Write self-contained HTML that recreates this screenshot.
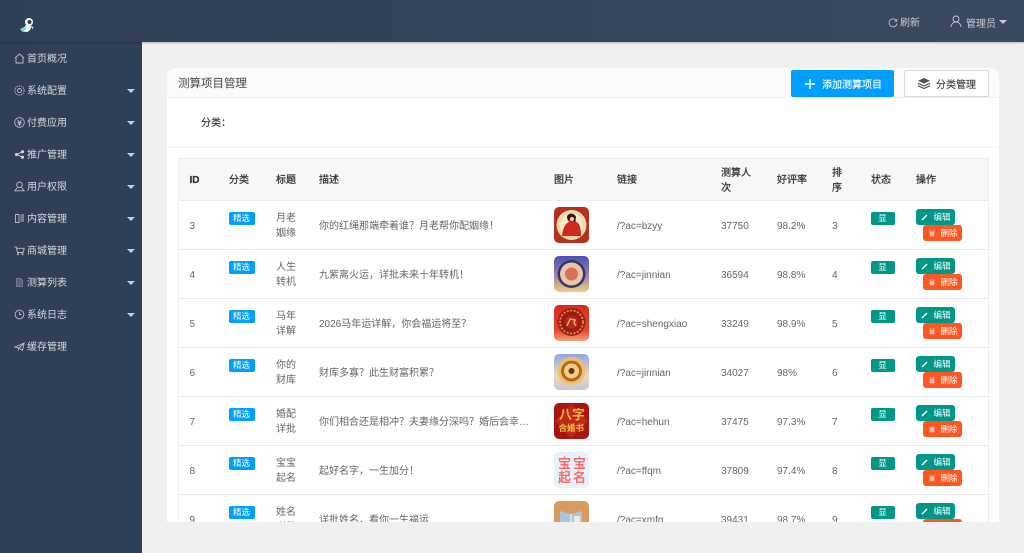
<!DOCTYPE html>
<html lang="zh"><head><meta charset="utf-8"><title>测算项目管理</title>
<style>
*{box-sizing:border-box}
html,body{margin:0;padding:0}
html{background:#f0f0f0}
body{width:1024px;height:553px;overflow:hidden;background:#f0f0f0;position:relative;font:10px/15px "Liberation Sans","Noto Sans CJK SC",sans-serif;color:#666;filter:blur(.3px)}
.top{position:absolute;left:0;top:0;width:1024px;height:42px;background:linear-gradient(90deg,#2f4056,#3a4a5e);box-shadow:0 1px 2px rgba(0,0,0,.25);z-index:3;color:#c8ccd2}
.top span,.top svg{position:absolute}
.side{position:absolute;left:0;top:42px;width:142px;height:511px;background:#2f4056;color:#d5d8dc;z-index:2}
.m{position:absolute;left:0;width:142px;height:32px;line-height:34px;padding-left:27px}
.m svg{position:absolute;left:14px;top:10px;width:11px;height:11px;fill:none;stroke:#b9bfc7;stroke-width:.9}
.m i{position:absolute;left:127px;top:14px;border:4.500px solid transparent;border-top:4px solid #c9cdd3;border-bottom:0}
.card{position:absolute;left:167px;top:68px;width:832px;height:454px;background:#fff;border-radius:8px 8px 0 0;overflow:hidden}
.ch{height:30px;border-bottom:1px solid #f2f2f2;background:#fbfbfb;font-size:11.500px;line-height:32px;padding-left:11px;color:#444}
.btn{position:absolute;top:2px;height:27px;border-radius:2px;font-size:10px;-webkit-text-stroke:.15px}
.b1{left:624px;width:103px;background:#009fff;color:#fff;padding-left:31px;line-height:31px}
.b2{left:737px;width:85px;background:#fff;border:1px solid #d9d9d9;color:#444;padding-left:31px;line-height:29px}
.flt{position:absolute;left:0;top:30px;width:832px;height:50px;border-bottom:2px solid #f6f6f6;color:#333;padding:18px 0 0 34px;-webkit-text-stroke:.15px}
table{position:absolute;left:11px;top:90px;width:810px;border-collapse:collapse;table-layout:fixed;border:1px solid #eee;border-width:1px 1px 0 1px}
th,td{padding:2px 10.500px 0 10.500px;text-align:left;font-weight:400;vertical-align:middle;position:relative;border-bottom:1px solid #ebebeb}
th{height:42px;background:#f7f7f7;color:#333;line-height:15px;-webkit-text-stroke:.25px}
td{height:49px;color:#666}
td.d{white-space:nowrap;overflow:hidden;text-overflow:ellipsis}
.tag{position:absolute;left:10px;top:11px;width:26px;height:13px;background:#009fff;border-radius:2px;color:#fff;font-size:8.500px;line-height:13px;text-align:center}
.show{width:24px;background:#009688}
.img{position:absolute;left:10px;top:6px;width:35px;height:36px;border-radius:5px;overflow:hidden;display:block}
.ed,.de{position:absolute;height:16px;width:39px;border-radius:3px;color:#fff;font-size:8.500px;line-height:16px;padding-left:18px}
.ed{left:10px;top:8px;background:#009688}
.de{left:17px;top:24px;background:#ff5722}
.ed svg,.de svg{position:absolute;left:5px;top:4px;width:8px;height:8px}
</style></head><body>
<div class="top">
<svg style="left:19px;top:17px" width="16" height="17" viewBox="0 0 16 17"><circle cx="10" cy="5" r="4" fill="#eef8f8"/><circle cx="10.500" cy="5" r="2" fill="#2f4056"/><path d="M6.500 8l6 1-1 3.500-3 2.500-6-.5 3-1.500z" fill="#e6f7f4"/><path d="M1 12l5-2.500 1 2.500-4 2.500z" fill="#6fdcca"/><path d="M12 9l2.500 1-1 2.500z" fill="#bfeee6"/></svg>
<svg style="left:888px;top:18px" width="10" height="10" viewBox="0 0 10 10" fill="none" stroke="#b9bfc7" stroke-width=".9"><path d="M8.600 3A4 4 0 1 0 9 5.500"/><path d="M8.800 1v2.200H6.600"/></svg>
<span style="left:900px;top:16px">刷新</span>
<svg style="left:950px;top:15px" width="12" height="13" viewBox="0 0 12 13" fill="none" stroke="#c8ccd2" stroke-width=".9"><circle cx="6" cy="4" r="3"/><path d="M1 12c.4-3 2.300-5 5-5s4.600 2 5 5"/></svg>
<span style="left:966px;top:17px">管理员</span>
<span style="left:999px;top:20px;border:4px solid transparent;border-top:4px solid #c8ccd2;border-bottom:0"></span>
</div>
<div class="side">
<div class="m" style="top:1px"><svg viewBox="0 0 11 11"><path d="M1 5l4.500-4L10 5M2 4.500V10h7V4.500"/></svg>首页概况</div>
<div class="m" style="top:33px"><svg viewBox="0 0 11 11"><circle cx="5.500" cy="5.500" r="2"/><circle cx="5.500" cy="5.500" r="4.600" stroke-dasharray="1.500 .8"/></svg>系统配置<i></i></div>
<div class="m" style="top:65px"><svg viewBox="0 0 11 11"><circle cx="5.500" cy="5.500" r="4.800"/><path d="M3.500 3l2 2.500 2-2.500M3.500 5.500h4M3.500 7h4M5.500 5.500V9"/></svg>付费应用<i></i></div>
<div class="m" style="top:97px"><svg viewBox="0 0 11 11" style="fill:#d5d8dc;stroke:#d5d8dc"><circle cx="2.500" cy="5.500" r="1.100"/><circle cx="8.500" cy="2.800" r="1.100"/><circle cx="8.500" cy="8.200" r="1.100"/><path d="M2.500 5.500l6-2.700M2.500 5.500l6 2.700" fill="none"/></svg>推广管理<i></i></div>
<div class="m" style="top:129px"><svg viewBox="0 0 11 11"><circle cx="5.500" cy="3.800" r="2.800"/><path d="M3.500 6.500L.8 9.800h9.400L7.500 6.500"/></svg>用户权限<i></i></div>
<div class="m" style="top:161px"><svg viewBox="0 0 11 11"><path d="M1.500 1.500h3.500v8H1.500zM6.500 2h3.500M6.500 4h3.500M6.500 6h3.500M6.500 8h3.500"/></svg>内容管理<i></i></div>
<div class="m" style="top:193px"><svg viewBox="0 0 11 11"><path d="M.5 2h1.800l1.200 5.500h5.500L10.300 3.300H2.700"/><circle cx="4" cy="9.200" r=".6"/><circle cx="8.500" cy="9.200" r=".6"/></svg>商城管理<i></i></div>
<div class="m" style="top:225px"><svg viewBox="0 0 11 11" style="stroke:#6f7c8c;fill:#55637a"><path d="M2.500 1.500h4l2 2v6h-6z"/></svg>测算列表<i></i></div>
<div class="m" style="top:257px"><svg viewBox="0 0 11 11"><circle cx="5.500" cy="5.500" r="4.400"/><path d="M5.500 2.800v2.900h2.400"/></svg>系统日志<i></i></div>
<div class="m" style="top:289px"><svg viewBox="0 0 11 11"><path d="M.8 6l9.400-4-1.800 7.500L5 7zM5 7L4 9.500M5 7l5.200-5"/></svg>缓存管理</div>
</div>
<div class="card">
<div class="ch">测算项目管理</div>
<div class="btn b1"><svg style="position:absolute;left:14px;top:9px" width="10" height="10" viewBox="0 0 10 10"><path d="M5 0v10M0 5h10" stroke="#fff" stroke-width="1.400"/></svg>添加测算项目</div>
<div class="btn b2"><svg style="position:absolute;left:12px;top:6px" width="14" height="13" viewBox="0 0 14 13"><path d="M7 1l6 2.800-6 2.800-6-2.800z" fill="#555"/><path d="M1 6.200l6 2.800 6-2.800M1 8.700l6 2.800 6-2.800" fill="none" stroke="#555" stroke-width="1.200"/></svg>分类管理</div>
<div class="flt">分类：</div>
<table>
<colgroup><col style="width:40px"><col style="width:47px"><col style="width:43px"><col style="width:235px"><col style="width:63px"><col style="width:104px"><col style="width:56px"><col style="width:55px"><col style="width:39px"><col style="width:45px"><col style="width:83px"></colgroup>
<tr><th><b>ID</b></th><th>分类</th><th>标题</th><th>描述</th><th>图片</th><th>链接</th><th>测算人次</th><th>好评率</th><th>排序</th><th>状态</th><th>操作</th></tr>
<tr><td>3</td><td><span class="tag">精选</span></td><td>月老姻缘</td><td class="d">你的红绳那端牵着谁？月老帮你配姻缘！</td>
<td><svg class="img" viewBox="0 0 35 36"><rect width="35" height="36" fill="#b5301f"/><circle cx="17.500" cy="18" r="15" fill="#f0d9a8"/><circle cx="17.500" cy="18" r="11.500" fill="#f4ead0"/><path d="M8 29c1-9 4-13 7-14l-2-6c2-4 8-3 8 1l1 5c4 1 5 7 5 14z" fill="#cf2a22"/><path d="M13 10c1-4 8-4 9 0l-1 5-4-4-3 3z" fill="#2a1512"/><circle cx="18" cy="12" r="2" fill="#f1cdb5"/></svg></td>
<td>/?ac=bzyy</td><td>37750</td><td>98.2%</td><td>3</td><td><span class="tag show">显</span></td>
<td><span class="ed"><svg viewBox="0 0 8 8"><path d="M1 7l5-5" stroke="#fff" stroke-width="1.500"/></svg>编辑</span><span class="de"><svg viewBox="0 0 8 8"><path d="M1 2h6M2 3h4v4H2z" fill="#ffc7b5" stroke="#ffc7b5" stroke-width=".6"/></svg>删除</span></td></tr>
<tr><td>4</td><td><span class="tag">精选</span></td><td>人生转机</td><td class="d">九紫离火运，详批未来十年转机！</td>
<td><svg class="img" viewBox="0 0 35 36"><defs><linearGradient id="g2" x1="0" y1="0" x2="0" y2="1"><stop offset="0" stop-color="#4a4fb0"/><stop offset=".55" stop-color="#a77fb0"/><stop offset="1" stop-color="#f3cf7c"/></linearGradient></defs><rect width="35" height="36" fill="url(#g2)"/><circle cx="17.500" cy="18" r="14" fill="#2f3a63"/><circle cx="17.500" cy="18" r="11.500" fill="#e9c6a8"/><circle cx="17.500" cy="18" r="6.500" fill="#d9705c"/></svg></td>
<td>/?ac=jinnian</td><td>36594</td><td>98.8%</td><td>4</td><td><span class="tag show">显</span></td>
<td><span class="ed"><svg viewBox="0 0 8 8"><path d="M1 7l5-5" stroke="#fff" stroke-width="1.500"/></svg>编辑</span><span class="de"><svg viewBox="0 0 8 8"><path d="M1 2h6M2 3h4v4H2z" fill="#ffc7b5" stroke="#ffc7b5" stroke-width=".6"/></svg>删除</span></td></tr>
<tr><td>5</td><td><span class="tag">精选</span></td><td>马年详解</td><td class="d">2026马年运详解，你会福运将至？</td>
<td><svg class="img" viewBox="0 0 35 36"><defs><linearGradient id="g3" x1="0" y1="0" x2="0" y2="1"><stop offset="0" stop-color="#d92a20"/><stop offset=".7" stop-color="#e6452e"/><stop offset="1" stop-color="#f2a27a"/></linearGradient></defs><rect width="35" height="36" fill="url(#g3)"/><circle cx="17.500" cy="17" r="14" fill="#9c1c14"/><circle cx="17.500" cy="17" r="11.500" fill="none" stroke="#d9893f" stroke-width="2" stroke-dasharray="2 1.500"/><circle cx="17.500" cy="17" r="6.500" fill="#b6281b"/><path d="M13 21l3-7 5 1-1 3 2 3" stroke="#e9ab5a" stroke-width="1.500" fill="none"/></svg></td>
<td>/?ac=shengxiao</td><td>33249</td><td>98.9%</td><td>5</td><td><span class="tag show">显</span></td>
<td><span class="ed"><svg viewBox="0 0 8 8"><path d="M1 7l5-5" stroke="#fff" stroke-width="1.500"/></svg>编辑</span><span class="de"><svg viewBox="0 0 8 8"><path d="M1 2h6M2 3h4v4H2z" fill="#ffc7b5" stroke="#ffc7b5" stroke-width=".6"/></svg>删除</span></td></tr>
<tr><td>6</td><td><span class="tag">精选</span></td><td>你的财库</td><td class="d">财库多寡？此生财富积累？</td>
<td><svg class="img" viewBox="0 0 35 36"><defs><linearGradient id="g4" x1="0" y1="0" x2="0" y2="1"><stop offset="0" stop-color="#8fa9e0"/><stop offset=".6" stop-color="#ecd9c0"/><stop offset="1" stop-color="#c9c5d6"/></linearGradient></defs><rect width="35" height="36" fill="url(#g4)"/><circle cx="17.500" cy="17" r="14" fill="#eac26c"/><circle cx="17.500" cy="17" r="10.500" fill="#b9651c"/><circle cx="17.500" cy="17" r="7.500" fill="#efce86"/><circle cx="17.500" cy="17" r="3" fill="#5a3a1c"/></svg></td>
<td>/?ac=jinnian</td><td>34027</td><td>98%</td><td>6</td><td><span class="tag show">显</span></td>
<td><span class="ed"><svg viewBox="0 0 8 8"><path d="M1 7l5-5" stroke="#fff" stroke-width="1.500"/></svg>编辑</span><span class="de"><svg viewBox="0 0 8 8"><path d="M1 2h6M2 3h4v4H2z" fill="#ffc7b5" stroke="#ffc7b5" stroke-width=".6"/></svg>删除</span></td></tr>
<tr><td>7</td><td><span class="tag">精选</span></td><td>婚配详批</td><td class="d">你们相合还是相冲？夫妻缘分深吗？婚后会幸福美满吗？</td>
<td><svg class="img" viewBox="0 0 35 36"><rect width="35" height="36" fill="#a91510"/><path d="M17.500 1L34 18 17.500 35 1 18z" fill="#bf2a17"/><text x="5" y="16" font-size="13" font-weight="700" fill="#f0b63f" font-family="Noto Sans CJK SC">八</text><text x="18" y="16" font-size="13" font-weight="700" fill="#f0b63f" font-family="Noto Sans CJK SC">字</text><text x="4.500" y="28" font-size="8.500" font-weight="700" fill="#f0c04a" font-family="Noto Sans CJK SC">合婚书</text></svg></td>
<td>/?ac=hehun</td><td>37475</td><td>97.3%</td><td>7</td><td><span class="tag show">显</span></td>
<td><span class="ed"><svg viewBox="0 0 8 8"><path d="M1 7l5-5" stroke="#fff" stroke-width="1.500"/></svg>编辑</span><span class="de"><svg viewBox="0 0 8 8"><path d="M1 2h6M2 3h4v4H2z" fill="#ffc7b5" stroke="#ffc7b5" stroke-width=".6"/></svg>删除</span></td></tr>
<tr><td>8</td><td><span class="tag">精选</span></td><td>宝宝起名</td><td class="d">起好名字，一生加分！</td>
<td><svg class="img" viewBox="0 0 35 36"><rect width="35" height="36" fill="#e6f3fb"/><text x="4" y="16" font-size="13" font-weight="700" fill="#fb6b6b" font-family="Noto Sans CJK SC">宝</text><text x="19" y="16" font-size="13" font-weight="700" fill="#fb6b6b" font-family="Noto Sans CJK SC">宝</text><text x="4" y="30" font-size="13" font-weight="700" fill="#fb6b6b" font-family="Noto Sans CJK SC">起</text><text x="19" y="30" font-size="13" font-weight="700" fill="#fb6b6b" font-family="Noto Sans CJK SC">名</text></svg></td>
<td>/?ac=ffqm</td><td>37809</td><td>97.4%</td><td>8</td><td><span class="tag show">显</span></td>
<td><span class="ed"><svg viewBox="0 0 8 8"><path d="M1 7l5-5" stroke="#fff" stroke-width="1.500"/></svg>编辑</span><span class="de"><svg viewBox="0 0 8 8"><path d="M1 2h6M2 3h4v4H2z" fill="#ffc7b5" stroke="#ffc7b5" stroke-width=".6"/></svg>删除</span></td></tr>
<tr><td>9</td><td><span class="tag">精选</span></td><td>姓名详批</td><td class="d">详批姓名，看你一生福运</td>
<td><svg class="img" viewBox="0 0 35 36"><rect width="35" height="36" fill="#d99a5f"/><path d="M6 10l11 3 11-3v20H6z" fill="#a8c6dc"/><path d="M17 13v16" stroke="#fff"/><path d="M20 15h6v10h-6z" fill="#f4e9d4"/></svg></td>
<td>/?ac=xmfq</td><td>39431</td><td>98.7%</td><td>9</td><td><span class="tag show">显</span></td>
<td><span class="ed"><svg viewBox="0 0 8 8"><path d="M1 7l5-5" stroke="#fff" stroke-width="1.500"/></svg>编辑</span><span class="de"><svg viewBox="0 0 8 8"><path d="M1 2h6M2 3h4v4H2z" fill="#ffc7b5" stroke="#ffc7b5" stroke-width=".6"/></svg>删除</span></td></tr>
</table>
</div>
</body></html>
